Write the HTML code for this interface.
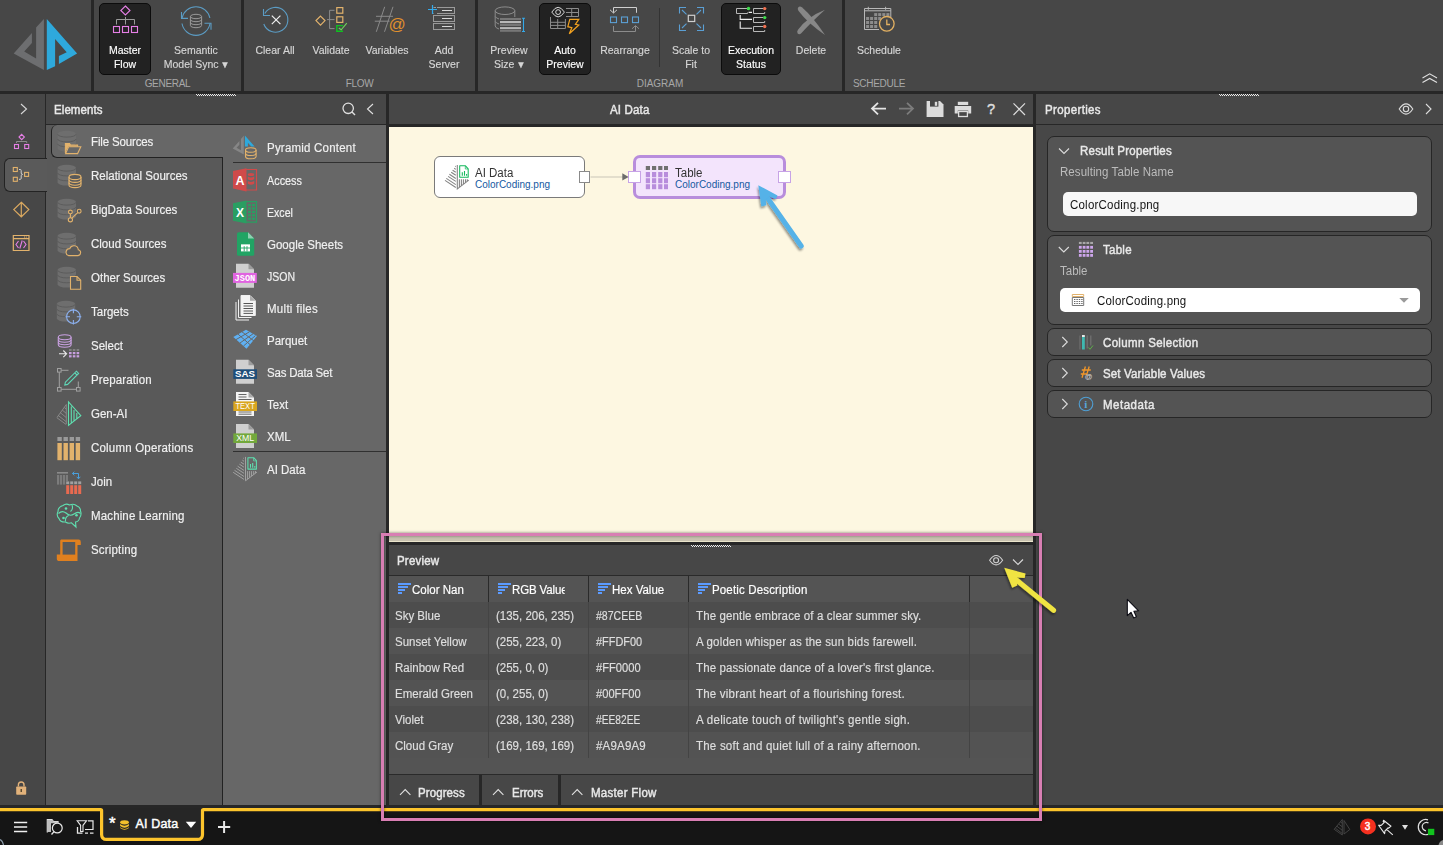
<!DOCTYPE html>
<html lang="en">
<head>
<meta charset="utf-8">
<title>AI Data - Data Flow</title>
<style>
*{box-sizing:border-box;margin:0;padding:0}
html,body{width:1443px;height:845px;overflow:hidden}
body{position:relative;background:#474747;font-family:"Liberation Sans",sans-serif;font-size:12px;color:#e4e4e4}
.abs{position:absolute}
.dk{position:absolute;background:#272727}
.t{position:absolute;white-space:nowrap;line-height:14px;transform:scaleX(.9583);transform-origin:0 50%}
.sb{font-weight:normal;-webkit-text-stroke:0.45px currentColor}
svg{position:absolute;overflow:visible}
/* ribbon */
.grp{position:absolute;top:77px;font-size:10px;color:#a8a8a8;line-height:14px;letter-spacing:-0.3px}
.rt{position:absolute;top:43px;width:120px;margin-left:-60px;text-align:center;line-height:14px;font-size:11px;transform:scaleX(.9545);transform-origin:50% 50%;color:#d6d6d6;white-space:nowrap;-webkit-text-stroke:0.15px currentColor}
.rt.on{color:#fff}
.rt i{font-style:normal;font-size:10px;line-height:10px;position:relative;top:-0.5px;margin:0 -1.6px 0 -1.2px}
/* categories */
.cat{position:absolute;left:91px;font-size:12px;color:#f0f0f0;line-height:14px;white-space:nowrap;transform:scaleX(.9583);transform-origin:0 50%;-webkit-text-stroke:0.18px currentColor}
.li{position:absolute;left:267px;font-size:12px;color:#f0f0f0;line-height:14px;white-space:nowrap;transform:scaleX(.9583);transform-origin:0 50%;-webkit-text-stroke:0.18px currentColor}
/* cards */
.card{position:absolute;left:1047px;width:385px;background:#545454;border:1px solid #262626;border-radius:7px}
.ct{position:absolute;font-weight:normal;-webkit-text-stroke:0.45px currentColor;font-size:12px;color:#e8e8e8;line-height:14px;white-space:nowrap;transform:scaleX(.9583);transform-origin:0 50%}
/* table */
.th{position:absolute;top:586px;font-size:12px;color:#fff;line-height:14px;white-space:nowrap;transform:scaleX(.9583);transform-origin:0 50%;-webkit-text-stroke:0.18px currentColor}
.td{position:absolute;font-size:12px;color:#dedede;line-height:14px;white-space:nowrap;transform:scaleX(.9583);transform-origin:0 50%;-webkit-text-stroke:0.18px currentColor}
</style>
</head>
<body>
<!-- RIBBON -->
<div id="ribbon" class="abs" style="left:0;top:0;width:1443px;height:91px;background:#474747"></div>
<div class="dk" style="left:0;top:91px;width:1443px;height:3px"></div>
<div class="dk" style="left:91px;top:0;width:3px;height:91px"></div>
<div class="dk" style="left:241px;top:0;width:3px;height:91px"></div>
<div class="dk" style="left:475px;top:0;width:3px;height:91px"></div>
<div class="dk" style="left:842px;top:0;width:3px;height:91px"></div>
<!--RIBBON-CONTENT-->
<div class="abs" style="left:99px;top:3px;width:52px;height:72px;background:#222;border:1px solid #0c0c0c;border-radius:5px"></div>
<div class="abs" style="left:539px;top:3px;width:52px;height:72px;background:#222;border:1px solid #0c0c0c;border-radius:5px"></div>
<div class="abs" style="left:721px;top:3px;width:60px;height:72px;background:#222;border:1px solid #0c0c0c;border-radius:5px"></div>
<div class="abs" style="left:659px;top:8px;width:1px;height:59px;background:#333"></div>
<div class="rt on" style="left:125px">Master<br>Flow</div>
<div class="rt" style="left:196px">Semantic<br>Model Sync <i>▼</i></div>
<div class="rt" style="left:275px">Clear All</div>
<div class="rt" style="left:331px">Validate</div>
<div class="rt" style="left:387px">Variables</div>
<div class="rt" style="left:444px">Add<br>Server</div>
<div class="rt" style="left:509px">Preview<br>Size <i>▼</i></div>
<div class="rt on" style="left:565px">Auto<br>Preview</div>
<div class="rt" style="left:625px">Rearrange</div>
<div class="rt" style="left:691px">Scale to<br>Fit</div>
<div class="rt on" style="left:751px">Execution<br>Status</div>
<div class="rt" style="left:811px">Delete</div>
<div class="rt" style="left:879px">Schedule</div>
<div class="grp" style="left:94px;width:147px;text-align:center">GENERAL</div>
<div class="grp" style="left:244px;width:231px;text-align:center">FLOW</div>
<div class="grp" style="left:478px;width:364px;text-align:center;letter-spacing:0px">DIAGRAM</div>
<div class="grp" style="left:853px">SCHEDULE</div>
<svg id="ribsvg" width="1443" height="94" viewBox="0 0 1443 94" style="left:0;top:0" fill="none" stroke-width="1">
<!-- logo -->
<polygon points="43.9,18.9 43.9,70.1 13.7,53.5 31.9,33 31.9,43.1 24.2,51.4 36.1,58.5 36.1,27.4" fill="#6d6e70" stroke="none"/>
<polygon points="46.8,18.9 77.1,53.5 58.9,63.9 58.9,56 66.7,52.3 55.1,39 55.1,66.3 46.8,70.1" fill="#2ea9dc" stroke="none"/>
<!-- master flow -->
<g stroke="#e67fe6" stroke-width="1.1"><path d="M125.4 6 L130 10.5 L125.4 15 L120.8 10.5 Z"/><rect x="113.5" y="26.5" width="6" height="6"/><rect x="122.5" y="26.5" width="6" height="6"/><rect x="131.5" y="26.5" width="6" height="6"/></g>
<path d="M125.5 17 V24.5 M116.5 24.5 V19.5 H134.5 V24.5" stroke="#9a9a9a"/>
<!-- semantic model sync -->
<g stroke="#5b9cc4" stroke-width="1.1"><path d="M182.1 18 A14.2 14.2 0 0 1 209.9 18"/><path d="M210 23.5 A14.2 14.2 0 0 1 182 23.5"/><path d="M181.5 12 V18.4 H188"/><path d="M204.5 23.3 H211 V29.8"/></g>
<g stroke="#9a9a9a" stroke-width="1"><ellipse cx="196" cy="16.5" rx="5.6" ry="2.2"/><path d="M190.4 16.5 V25.5 A5.6 2.2 0 0 0 201.6 25.5 V16.5"/><path d="M190.4 19.5 A5.6 2.2 0 0 0 201.6 19.5 M190.4 22.5 A5.6 2.2 0 0 0 201.6 22.5"/></g>
<!-- clear all -->
<g stroke="#5b9cc4" stroke-width="1.1"><path d="M264.8 13.5 A12.4 12.4 0 1 1 263.8 24"/><path d="M263.5 9 V15.5 H270"/></g>
<path d="M271.8 15.6 L280.4 24.2 M280.4 15.6 L271.8 24.2" stroke="#f0f0f0" stroke-width="1.2"/>
<!-- validate -->
<g stroke="#e2b26c" stroke-width="1.2"><path d="M320.5 16.1 L325 20.6 L320.5 25.1 L316 20.6 Z"/><rect x="336.8" y="7.6" width="6" height="5.6"/><rect x="336.8" y="16.8" width="6" height="5.6"/></g>
<path d="M334.5 10.3 H329.6 V28.6 H334.5 M327 19.6 H334.5" stroke="#8c8c8c"/>
<path d="M343 25.6 H336.8 V31.2 H343" stroke="#0fc020" stroke-width="1.4"/>
<path d="M338.8 28 L341.2 29.8 L346.8 23.2" stroke="#6fd35c" stroke-width="1.1"/>
<!-- variables -->
<path d="M384.7 6.8 L376.3 31.8 M393 6.8 L384.5 31.8 M376 16.3 H393 M374.8 21.2 H389.5" stroke="#8a8a8a"/>
<text x="388.5" y="30" font-family="Liberation Sans, sans-serif" font-size="17" fill="#e0902e" stroke="none" letter-spacing="0">@</text>
<!-- add server -->
<g stroke="#9a9a9a"><rect x="433.5" y="7.5" width="21" height="6"/><rect x="433.5" y="15.5" width="21" height="6"/><rect x="433.5" y="23.5" width="21" height="6"/></g>
<path d="M442 10.5 H452 M442 18.5 H452 M442 26.5 H452" stroke="#d8d8d8" stroke-width="1.2"/>
<rect x="427" y="4" width="10" height="10" fill="#474747" stroke="none"/>
<path d="M433.5 7.5 H436 M433.5 13.5 V14" stroke="#9a9a9a"/>
<path d="M428 9.5 H437 M432.5 5 V14" stroke="#33a9ea" stroke-width="1.2"/>
<!-- preview size -->
<g stroke="#8c8c8c"><ellipse cx="505" cy="10.7" rx="9.8" ry="3.8"/><path d="M495.2 10.7 V26 Q495.5 28 499 29 M514.8 10.7 V17"/><path d="M495.2 16.5 Q496 18 499 19 M495.2 21.5 Q496 23 499 24"/></g>
<g stroke="none"><rect x="500" y="18" width="21" height="2" fill="#777"/><rect x="500" y="21" width="21" height="2.2" fill="#b8b8b8"/><rect x="500" y="24" width="21" height="2" fill="#777"/><rect x="500" y="27.1" width="21" height="2.1" fill="#b8b8b8"/><rect x="500" y="30" width="21" height="1.8" fill="#777"/></g>
<path d="M523.5 18 V31.8 M522 18.3 H525 M522 31.5 H525" stroke="#33a9ea" stroke-width="1.1"/>
<!-- auto preview -->
<g stroke="#dcdcdc" stroke-width="1"><path d="M551.8 12.1 Q558.1 2.5 564.4 12.1 Q558.1 21.7 551.8 12.1 Z"/><circle cx="558.1" cy="12.1" r="2.4"/></g>
<path d="M566 8.5 H578.5 V16.5 H566 M566 12.5 H578.5 M571.7 8.5 V16.5" stroke="#8c8c8c"/>
<path d="M550.5 17 V28.5 H565.4 V19 M550.5 22.3 H565.4 M550.5 25.4 H565.4 M557.7 19 V28.5" stroke="#8c8c8c"/>
<path d="M569.8 19.4 H578.8 L575.4 24.3 L578.8 25 L569.3 33.8 L571.9 27.6 L567.8 26.7 Z" stroke="#f3a21f" stroke-width="1.2"/>
<!-- rearrange -->
<g stroke="#5b9fd4" stroke-width="1.1"><rect x="610.5" y="17" width="6" height="5.6"/><rect x="621.5" y="17" width="6" height="5.6"/><rect x="632.5" y="17" width="6" height="5.6"/></g>
<path d="M636.5 12.8 V7.5 H613.5 V12.8 M610 9.8 L613.5 13 L617 9.8" stroke="#cfcfcf"/>
<path d="M613.5 26 V31.5 H635.5 V26 M632 28.8 L635.5 25.6 L639 28.8" stroke="#8c8c8c"/>
<!-- scale to fit -->
<g stroke="#5b9fd4" stroke-width="1.1"><path d="M679.5 13.5 V7.5 H686 M697 7.5 H703.5 V13.5 M703.5 24.5 V30.5 H697 M686 30.5 H679.5 V24.5"/><path d="M682 10 L686.5 14.3 M701 10 L696.5 14.3 M682 28 L686.5 23.7 M701 28 L696.5 23.7"/></g>
<rect x="688.3" y="15.3" width="6.4" height="6.2" stroke="#cfcfcf" stroke-width="1.2"/>
<!-- execution status -->
<g stroke="#b8b8b8"><path d="M747.5 9.5 V8.5 H736.5 V13.5 H747.5 V12.5 M764.7 12 V13.5 H753.5 V8.5 H763"/><path d="M763 17.5 H753.5 V22.5 H764.7 V21 M763 26.5 H753.5 V31.5 H764.7 V30"/></g>
<path d="M748.6 12.4 H752 M740.2 15 V19.4 H752 M740.2 21.4 V28.3 H752" stroke="#f0f0f0" stroke-width="1.1"/>
<g stroke="none"><circle cx="748.5" cy="8.5" r="1.7" fill="#3ddc4a"/><circle cx="764.7" cy="8.6" r="1.7" fill="#f07050"/><circle cx="764.7" cy="17.6" r="1.7" fill="#3ddc4a"/><circle cx="764.7" cy="26.5" r="1.7" fill="#f07050"/></g>
<!-- delete -->
<g stroke="none" fill="#878787"><path d="M798.3 7.2 Q800 5.8 802.2 7.6 Q813 17.1 825 35 Q807.2 22.6 798.6 11 Q797 8.6 798.3 7.2 Z"/><path d="M797.6 33.4 Q796.6 31.6 798 29.8 Q807.5 16.6 825 9.7 Q811.2 22.2 801.5 33 Q799.2 35.2 797.6 33.4 Z"/></g>
<!-- schedule -->
<path d="M864.5 8.5 H890.8 V19 M879 29.5 H864.5 V8.5 M864.5 10.8 H890.8 M868.3 6.8 V9.8 M885.6 6.8 V9.8" stroke="#b8b8b8"/>
<g stroke="none" fill="#8c8c8c"><rect x="874.2" y="13.1" width="3" height="3"/><rect x="878.2" y="13.1" width="3" height="3"/><rect x="882.3" y="13.1" width="3" height="3"/><rect x="886.4" y="13.1" width="3" height="3"/>
<rect x="866.1" y="17" width="3" height="3"/><rect x="870.1" y="17" width="3" height="3"/><rect x="874.2" y="17" width="3" height="3"/><rect x="878.2" y="17" width="3" height="3"/>
<rect x="866.1" y="21" width="3" height="3"/><rect x="870.1" y="21" width="3" height="3"/><rect x="874.2" y="21" width="3" height="3"/>
<rect x="866.1" y="25" width="3" height="3"/><rect x="870.1" y="25" width="3" height="3"/><rect x="874.2" y="25" width="3" height="3"/></g>
<circle cx="886.8" cy="23.8" r="7.3" fill="#474747" stroke="#e2b062" stroke-width="1.3"/>
<path d="M886.8 19.5 V24.5 H890" stroke="#e2b062" stroke-width="1.3"/>
<!-- collapse chevrons -->
<path d="M1422.5 78 L1429.7 73.8 L1437 78 M1422.5 82.6 L1429.7 78.4 L1437 82.6" stroke="#e0e0e0" stroke-width="1.1"/>
</svg>
<!--/RIBBON-CONTENT-->

<!-- LEFT MINI BAR -->
<div class="dk" style="left:45px;top:94px;width:1px;height:711px"></div>
<!--MINIBAR-->

<!-- ELEMENTS PANEL -->
<div class="abs" style="left:46px;top:125px;width:177px;height:680px;background:#595959"></div>
<div class="abs" style="left:223px;top:125px;width:163px;height:680px;background:#676767"></div>
<div class="dk" style="left:46px;top:124px;width:340px;height:1px"></div>
<!--ELEMENTS-->
<!-- mini bar selected tab -->
<div class="abs" style="left:4px;top:158px;width:43px;height:34px;background:#5a5a5a;border:1px solid #232323;border-right:none;border-radius:6px 0 0 6px"></div>
<!-- selected category tab -->
<div class="abs" style="left:51px;top:125px;width:172px;height:33px;background:#676767;border:1px solid #222;border-right:none;border-top:none;border-radius:6px 0 0 6px"></div>
<div class="dk" style="left:222px;top:157px;width:1px;height:648px;background:#222"></div>
<div class="t sb" style="left:53.8px;top:103px;font-size:12px;color:#e8e8e8;letter-spacing:0.08px">Elements</div>
<div class="cat" style="top:135px;letter-spacing:-0.15px">File Sources</div>
<div class="cat" style="top:169px">Relational Sources</div>
<div class="cat" style="top:203px">BigData Sources</div>
<div class="cat" style="top:237px">Cloud Sources</div>
<div class="cat" style="top:271px">Other Sources</div>
<div class="cat" style="top:305px">Targets</div>
<div class="cat" style="top:339px">Select</div>
<div class="cat" style="top:373px;letter-spacing:0.13px">Preparation</div>
<div class="cat" style="top:407px">Gen-AI</div>
<div class="cat" style="top:441px;letter-spacing:0.2px">Column Operations</div>
<div class="cat" style="top:475px">Join</div>
<div class="cat" style="top:509px;letter-spacing:0.14px">Machine Learning</div>
<div class="cat" style="top:543px;letter-spacing:0.18px">Scripting</div>
<div class="dk" style="left:233px;top:162px;width:153px;height:1px;background:#303030"></div>
<div class="dk" style="left:233px;top:451px;width:153px;height:1px;background:#303030"></div>
<div class="li" style="top:141px;letter-spacing:0.22px">Pyramid Content</div>
<div class="li" style="top:174px;transform:scaleX(0.904)">Access</div>
<div class="li" style="top:206px;transform:scaleX(0.883)">Excel</div>
<div class="li" style="top:238px">Google Sheets</div>
<div class="li" style="top:270px;transform:scaleX(0.877)">JSON</div>
<div class="li" style="top:302px;letter-spacing:0.3px">Multi files</div>
<div class="li" style="top:334px">Parquet</div>
<div class="li" style="top:366px;letter-spacing:-0.22px">Sas Data Set</div>
<div class="li" style="top:398px">Text</div>
<div class="li" style="top:430px">XML</div>
<div class="li" style="top:463px">AI Data</div>
<svg id="elsvg" width="389" height="720" viewBox="0 94 389 720" style="left:0;top:94px" fill="none" stroke-width="1">
<defs>
<g id="dbs"><path d="M0 2.9 A9.2 2.9 0 0 1 18.4 2.9 V17.8 A9.2 2.9 0 0 1 0 17.8 Z" fill="#6e6e6e" stroke="none"/><path d="M0 3.4 A9.2 2.9 0 0 0 18.4 3.4 M0 8.2 A9.2 2.9 0 0 0 18.4 8.2 M0 13.1 A9.2 2.9 0 0 0 18.4 13.1" stroke="#5c5c5c" stroke-width="1"/></g>
<g id="fileg"><path d="M0 0 H12.5 L18 5.5 V24 H0 Z" fill="#cfcfcf" stroke="none"/><path d="M12.5 0 V5.5 H18 Z" fill="#9c9c9c" stroke="none"/></g>
</defs>
<!-- header icons -->
<path d="M21 104 L26.5 109 L21 114" stroke="#d8d8d8" stroke-width="1.1"/>
<circle cx="348.2" cy="108.3" r="5.2" stroke="#e0e0e0" stroke-width="1.3"/><path d="M352 112 L355 115" stroke="#e0e0e0" stroke-width="1.4"/>
<path d="M373 104 L367.5 109 L373 114" stroke="#e0e0e0" stroke-width="1.1"/>
<!-- drag handle -->
<path d="M196 94.5 H236" stroke="#ececec" stroke-width="1" stroke-dasharray="1 1" shape-rendering="crispEdges"/><path d="M197 95.5 H237" stroke="#ececec" stroke-width="1" stroke-dasharray="1 1" shape-rendering="crispEdges"/>
<!-- mini bar icons -->
<g stroke="#e67fe6" stroke-width="1.1"><path d="M21.7 134.3 L24.4 137 L21.7 139.7 L19 137 Z"/><rect x="14.5" y="144.5" width="4" height="4"/><rect x="24.7" y="144.5" width="4" height="4"/></g>
<path d="M16.5 143 V141.5 H26.7 V143" stroke="#8c8c8c"/>
<g stroke="#e2b26c" stroke-width="1.1"><rect x="13.3" y="167.5" width="4" height="4"/><rect x="13.3" y="177.3" width="4" height="4"/><rect x="24.6" y="172.4" width="4" height="4"/></g>
<path d="M19 169.5 H20.3 Q21.2 169.5 21.2 170.5 V173 Q21.2 174.4 22.6 174.4 Q21.2 174.4 21.2 175.8 V178.3 Q21.2 179.3 20.3 179.3 H19" stroke="#cfcfcf"/>
<path d="M21.3 202.3 L28.8 209.6 L21.3 216.8 L13.8 209.6 Z M21.3 202.3 V216.8" stroke="#d9a860" stroke-width="1.2"/>
<path d="M13.3 235.5 H29 V250.5 H13.3 Z M13.3 238.7 H29" stroke="#e2b26c" stroke-width="1.2"/>
<path d="M18.5 241 L16 244.5 L18.5 248 M23.5 241 L26 244.5 L23.5 248 M22.2 240.5 L19.8 248.5" stroke="#e67fe6" stroke-width="1.1"/>
<path d="M24 237 H27.5" stroke="#e2b26c" stroke-width="1" stroke-dasharray="1 0.8"/>
<!-- lock -->
<rect x="16.2" y="786.5" width="10" height="8.2" rx="0.8" fill="#e2b27a" stroke="none"/><path d="M18.4 786.5 V784.8 A2.8 2.8 0 0 1 24 784.8 V786.5" stroke="#e2b27a" stroke-width="1.4"/><rect x="20.5" y="789" width="1.5" height="3" fill="#5a4a30" stroke="none"/>
<!-- category icons -->
<use href="#dbs" x="57.6" y="130.8"/>
<path d="M65.6 153.6 H77.6 L80.8 146.8 H68.6 Z" stroke="#e2b26c" stroke-width="1.1" fill="#686868"/><path d="M65.4 153 V143.6 H69.6 L70.6 145 H77.6 V146.8" stroke="#e2b26c" stroke-width="1.1"/><path d="M65.6 143.8 H69.6 L70.6 145.2 H77.4 V146.6 H68.4 L65.6 152 Z" fill="#e2b26c" stroke="none"/>
<use href="#dbs" x="57.6" y="164.8"/>
<g stroke="#e2b26c" stroke-width="1.1"><path d="M69 177 A6 2.6 0 0 1 81 177 V185 A6 2.6 0 0 1 69 185 Z" fill="#5a5a5a"/><path d="M69 177 A6 2.6 0 0 0 81 177 M69 179.8 A6 2.6 0 0 0 81 179.8 M69 182.6 A6 2.6 0 0 0 81 182.6"/></g>
<use href="#dbs" x="57.6" y="198.8"/>
<g stroke="#e2b26c" stroke-width="1.1" fill="#5a5a5a"><path d="M70.4 219.6 V212.2 M71.6 218.4 L78 212.4"/><circle cx="70.4" cy="212" r="1.9"/><circle cx="79.2" cy="211.2" r="1.9"/><circle cx="70.4" cy="219.8" r="2.1"/></g>
<use href="#dbs" x="57.6" y="232.8"/>
<path d="M68.5 255.6 H78 A3 3 0 0 0 78.3 249.7 A4.4 4.4 0 0 0 69.8 248.6 A3.6 3.6 0 0 0 68.5 255.6 Z" stroke="#e2b26c" stroke-width="1.1" fill="#5a5a5a"/>
<use href="#dbs" x="57.6" y="266.8"/>
<path d="M70.5 276.5 H77 L80.7 280.2 V289.3 H70.5 Z" stroke="#e2b26c" stroke-width="1.1" fill="#5a5a5a"/><path d="M77 276.5 V280.2 H80.7" stroke="#e2b26c" stroke-width="1.1"/>
<use href="#dbs" x="56.8" y="300.8"/>
<g stroke="#8cb0ee" stroke-width="1.1"><circle cx="73.4" cy="316.7" r="6.8" fill="#5a5a5a"/><path d="M73.4 308.8 V313.3 M73.4 320 V324.6 M65.5 316.7 H70 M76.8 316.7 H81.3"/></g>
<!-- select -->
<g stroke="#c8a0e0" stroke-width="1.1"><path d="M58.3 337.2 A6.4 2.5 0 0 1 71.1 337.2 V344.8 A6.4 2.5 0 0 1 58.3 344.8 Z"/><path d="M58.3 337.2 A6.4 2.5 0 0 0 71.1 337.2 M58.3 339.8 A6.4 2.5 0 0 0 71.1 339.8 M58.3 342.3 A6.4 2.5 0 0 0 71.1 342.3"/></g>
<path d="M59 353.8 H66.5 M63.3 350.5 L66.6 353.8 L63.3 357.1" stroke="#e8e8e8" stroke-width="1.1"/>
<g stroke="none"><rect x="69" y="349.2" width="2.6" height="1.6" fill="#8c8c8c"/><rect x="72.8" y="349.2" width="2.6" height="1.6" fill="#8c8c8c"/><rect x="76.6" y="349.2" width="2.6" height="1.6" fill="#8c8c8c"/><rect x="69" y="352" width="2.6" height="2.2" fill="#c8a0e0"/><rect x="72.8" y="352" width="2.6" height="2.2" fill="#c8a0e0"/><rect x="76.6" y="352" width="2.6" height="2.2" fill="#c8a0e0"/><rect x="69" y="355.2" width="2.6" height="2.2" fill="#c8a0e0"/><rect x="72.8" y="355.2" width="2.6" height="2.2" fill="#c8a0e0"/><rect x="76.6" y="355.2" width="2.6" height="2.2" fill="#c8a0e0"/></g>
<!-- preparation -->
<g stroke="#a0a0a0" stroke-width="1"><rect x="57.5" y="368.5" width="3.6" height="3.6"/><rect x="57.5" y="387.5" width="3.6" height="3.6"/><rect x="76.5" y="387.5" width="3.6" height="3.6"/><path d="M61.1 370.3 H68.5 M59.3 372.1 V387.5 M61.1 389.3 H76.5 M78.3 387.5 V381.5"/></g>
<path d="M76.4 371.2 L78.6 373.4 L67.6 384.4 L64.8 385 L65.4 382.2 Z M74.8 372.8 L77 375" stroke="#5fd8b8" stroke-width="1.1"/>
<!-- gen-ai -->
<path d="M68.5 402 V425.4 L80.8 415.6 Z M71.3 406.5 V422.8 M74 410 V420.8 M76.8 413 V418.6" stroke="#5fe0b0" stroke-width="1.1"/>
<path d="M66.3 404.5 V424 M64.2 407.4 L66.3 409.2 M62.2 410 L66.3 413.4 M60.2 412.6 L66.3 417.6 M58.2 415.4 L66.3 421.8 M57 417.8 L66.3 424.6 M66.3 404.5 L57 417.5" stroke="#8c8c8c" stroke-width="0.9"/>
<!-- column ops -->
<g stroke="none"><rect x="57.4" y="437" width="4.4" height="4" fill="#9a9a9a"/><rect x="63.5" y="437" width="4.4" height="4" fill="#9a9a9a"/><rect x="69.6" y="437" width="4.4" height="4" fill="#9a9a9a"/><rect x="75.7" y="437" width="4.4" height="4" fill="#9a9a9a"/><rect x="57.4" y="443" width="4.4" height="17.2" fill="#e2b26c"/><rect x="63.5" y="443" width="4.4" height="17.2" fill="#e2b26c"/><rect x="69.6" y="443" width="4.4" height="17.2" fill="#e2b26c"/><rect x="75.7" y="443" width="4.4" height="17.2" fill="#e2b26c"/></g>
<!-- join -->
<g stroke="none"><rect x="57" y="472" width="11" height="1.6" fill="#8a8a8a"/><rect x="57" y="475" width="2.2" height="9.6" fill="#7c7c7c"/><rect x="60" y="475" width="2.2" height="9.6" fill="#7c7c7c"/><rect x="63" y="475" width="2.2" height="9.6" fill="#7c7c7c"/><rect x="66" y="475" width="2" height="6" fill="#7c7c7c"/>
<rect x="66.2" y="481.4" width="3" height="2.8" fill="#a0a0a0"/><rect x="70.2" y="481.4" width="3" height="2.8" fill="#a0a0a0"/><rect x="74.2" y="481.4" width="3" height="2.8" fill="#a0a0a0"/><rect x="78.2" y="481.4" width="3" height="2.8" fill="#a0a0a0"/>
<rect x="66.2" y="485.2" width="3" height="8.8" fill="#e96a50"/><rect x="70.2" y="485.2" width="3" height="8.8" fill="#e96a50"/><rect x="74.2" y="485.2" width="3" height="8.8" fill="#e96a50"/><rect x="78.2" y="485.2" width="3" height="8.8" fill="#e96a50"/></g>
<path d="M72.5 473.5 H78.5 V478.5 M74.3 471.7 L72.4 473.5 L74.3 475.3 M76.7 476.8 L78.5 478.8 L80.3 476.8" stroke="#4aa0dc" stroke-width="1"/>
<!-- machine learning -->
<g stroke="#5fe0b0" stroke-width="1.1"><path d="M63 505.5 Q66 503 69.5 505 Q74 503 77 506 Q80.5 507 80.5 511 Q82 515 79.5 518 Q79 521.5 75.5 522 L76 527 L71.5 522.8 Q68 524 65.5 522 Q60.5 522.5 59 518.5 Q56 515.5 58 511.5 Q58 507 63 505.5 Z"/><path d="M58.5 513.5 Q62 510 66 513 Q70 517 74 514 Q78 511 80.5 513.5 M65.5 521.5 Q65 517 68.5 515.5 M72 505 Q73.5 509 70.5 511.5"/></g>
<g fill="#5fe0b0" stroke="none"><circle cx="66" cy="508.5" r="1.3"/><circle cx="76.5" cy="515.2" r="1.3"/><circle cx="63.5" cy="518" r="1.3"/></g>
<!-- scripting -->
<path d="M61 539.6 H78.5 Q80.8 539.6 80.8 542 V545 H77.5 V561 H59.5 Q56.8 561 56.8 558.4 V554.6 H60.2 V540.4 Z" fill="#e0801f" stroke="none"/><rect x="62.6" y="542" width="12.6" height="12.6" fill="#5a5a5a" stroke="none"/>
<!-- LIST ICONS -->
<!-- pyramid content -->
<g transform="translate(243.8,135.8) scale(0.367) translate(-43.9,-18.9)"><polygon points="43.9,18.9 43.9,70.1 13.7,53.5 31.9,33 31.9,43.1 24.2,51.4 36.1,58.5 36.1,27.4" fill="#868686" stroke="none"/></g>
<polygon points="244.9,135.4 254.6,146.5 251.2,146.5 247.9,142.8 247.9,146.5 244.9,146.5" fill="#2ea9dc" stroke="none"/>
<g stroke="#e2b26c" stroke-width="1.1"><path d="M245.5 150 A5.3 2.3 0 0 1 256.1 150 V156.4 A5.3 2.3 0 0 1 245.5 156.4 Z" fill="#676767"/><path d="M245.5 150 A5.3 2.3 0 0 0 256.1 150 M245.5 153.2 A5.3 2.3 0 0 0 256.1 153.2"/></g>
<!-- access -->
<path d="M246 169.5 H256.5 V190 H246" stroke="#d04a4a" stroke-width="1.2"/><g fill="#d04a4a" stroke="none"><ellipse cx="251" cy="174.5" rx="3.2" ry="1.5"/><path d="M247.8 176.5 Q251 178.5 254.2 176.5 V179.3 Q251 181.3 247.8 179.3 Z M247.8 181 Q251 183 254.2 181 V183.8 Q251 185.8 247.8 183.8 Z"/></g>
<path d="M233 171 L246.5 168.3 V191.4 L233 188.6 Z" fill="#d04a4a" stroke="none"/>
<text x="235.6" y="184.6" font-family="Liberation Sans, sans-serif" font-weight="bold" font-size="12.5" fill="#fff" stroke="none">A</text>
<!-- excel -->
<path d="M246 201.6 H256.5 V222.2 H246" stroke="#2a9e62" stroke-width="1.2"/><g fill="#2a9e62" stroke="none"><rect x="248" y="204" width="3" height="2.2"/><rect x="252" y="204" width="3" height="2.2"/><rect x="248" y="207.4" width="3" height="2.2"/><rect x="252" y="207.4" width="3" height="2.2"/><rect x="248" y="210.8" width="3" height="2.2"/><rect x="252" y="210.8" width="3" height="2.2"/><rect x="248" y="214.2" width="3" height="2.2"/><rect x="252" y="214.2" width="3" height="2.2"/><rect x="248" y="217.6" width="3" height="2.2"/><rect x="252" y="217.6" width="3" height="2.2"/></g>
<path d="M233 203.2 L246.5 200.5 V223.6 L233 220.8 Z" fill="#2a9e62" stroke="none"/>
<text x="236" y="216.6" font-family="Liberation Sans, sans-serif" font-weight="bold" font-size="12" fill="#fff" stroke="none">X</text>
<!-- google sheets -->
<path d="M238.6 232.2 H248 L254.2 238.4 V254.2 Q254.2 255.8 252.6 255.8 H238.6 Q237 255.8 237 254.2 V233.8 Q237 232.2 238.6 232.2 Z" fill="#21a464" stroke="none"/><path d="M248 232.2 V238.4 H254.2 Z" fill="#8ed1b1" stroke="none"/>
<rect x="241" y="244.6" width="9" height="6.8" fill="#fff" stroke="none"/><path d="M241 248 H250 M244.2 246.2 V251.4 M247 246.2 V251.4" stroke="#21a464" stroke-width="0.9"/><rect x="241" y="244.6" width="9" height="1.4" fill="#fff" stroke="none"/>
<!-- json -->
<use href="#fileg" x="236" y="263.8"/><rect x="233" y="272.9" width="23.8" height="10" fill="#e063e0" stroke="none"/>
<text x="234.6" y="281.2" font-family="Liberation Mono, monospace" font-weight="bold" font-size="8.6" fill="#fff" stroke="none" textLength="20.6" lengthAdjust="spacingAndGlyphs">JSON</text>
<!-- multi files -->
<g stroke="#f0f0f0" stroke-width="1" fill="#686868"><path d="M236 302 V320 H249"/><path d="M238.5 299.5 V317.5 H251.5"/><path d="M241 295.5 H250 L255.3 300.8 V315.5 H241 Z" fill="#f4f4f4"/></g>
<path d="M250 295.5 V300.8 H255.3 Z" fill="#aaa" stroke="none"/><path d="M243.5 303.5 H253 M243.5 306 H253 M243.5 308.5 H253 M243.5 311 H253 M243.5 313.4 H253" stroke="#555" stroke-width="1"/>
<!-- parquet -->
<g fill="#5fb0f2" stroke="none"><path d="M246 329.8 L257 336 L246.5 348.7 L233.3 337 Z"/></g>
<path d="M237.5 333.7 L250.5 345 M241.8 331.7 L254 341 M236 339.6 L249.5 331.8 M240 343 L253 333.8 M243.5 346 L255.5 335.5" stroke="#686868" stroke-width="1"/>
<!-- sas -->
<use href="#fileg" x="236" y="359.8"/><rect x="233.3" y="369.3" width="23.7" height="9.6" fill="#1f4e79" stroke="none"/>
<text x="235" y="377.3" font-family="Liberation Sans, sans-serif" font-weight="bold" font-size="8.6" fill="#fff" stroke="none" textLength="20" lengthAdjust="spacingAndGlyphs">SAS</text>
<!-- text -->
<path d="M236 392 H248.5 L254 397.5 V416 H236 Z" fill="#f4f4f4" stroke="none"/><path d="M248.5 392 V397.5 H254 Z" fill="#aaa" stroke="none"/><path d="M238.5 394.5 H246.5 M238.5 397 H246.5 M238.5 399.5 H251.5 M238.5 412 H251.5 M238.5 414.2 H251.5" stroke="#666" stroke-width="1"/>
<rect x="233.3" y="401.4" width="23.7" height="9.6" fill="#d9a620" stroke="none"/>
<text x="235.4" y="409.3" font-family="Liberation Sans, sans-serif" font-size="8.4" fill="#fff" stroke="none" textLength="19.4" lengthAdjust="spacingAndGlyphs">TEXT</text>
<!-- xml -->
<use href="#fileg" x="236" y="424"/><rect x="233.3" y="433.4" width="23.7" height="9.6" fill="#72a83c" stroke="none"/>
<text x="236.2" y="441.3" font-family="Liberation Sans, sans-serif" font-size="8.4" fill="#fff" stroke="none" textLength="18" lengthAdjust="spacingAndGlyphs">XML</text>
<!-- ai data -->
<path d="M243.3 458.1 L244.0 458.5 M242.4 460.2 L244.0 461.3 M240.8 462.2 L244.0 464.2 M239.4 464.2 L244.0 467.2 M237.6 466.2 L244.0 470.4 M236.3 468.3 L244.0 473.3 M234.5 470.3 L244.0 476.5 M233.2 472.3 L244.0 479.4 M245.5 456.9 V480.8 L257.0 472.0 M247.6 471.1 V479.2 M249.6 471.1 V477.7 M251.6 471.1 V476.1 M253.7 471.1 V474.5 M255.5 471.1 V473.1" stroke="#a2a2a2" stroke-width="1" fill="none"/><path d="M247.9 457.7 H253.7 L256.4 460.7 V469.1 H247.9 Z" fill="#676767" stroke="#5fe0b0" stroke-width="1.05" stroke-linejoin="round"/><path d="M253.5 457.9 V460.9 H256.2" fill="none" stroke="#5fe0b0" stroke-width="0.7"/><path d="M250.5 467.7 V464.1 M252.7 467.7 V462.9 M254.8 467.7 V465.9" stroke="#5fe0b0" stroke-width="1.1" fill="none"/>
</svg>
<!--/ELEMENTS-->

<!-- vertical dark bands -->
<div class="dk" style="left:386px;top:94px;width:3px;height:711px"></div>
<div class="dk" style="left:1033px;top:94px;width:3px;height:711px"></div>

<!-- CANVAS -->
<div class="dk" style="left:389px;top:124px;width:644px;height:3px"></div>
<div class="abs" style="left:389px;top:127px;width:644px;height:409px;background:#fdf7e1"></div>
<div class="abs" style="left:389px;top:535px;width:644px;height:7px;background:linear-gradient(#d6d4bc 0,#c8c2b0 2px,#c8c2b0 5.6px,#ebe5cb 6px)"></div>
<div class="dk" style="left:389px;top:542px;width:644px;height:3px"></div>
<!--CANVAS-->
<div class="t sb" style="left:610px;top:103px;font-size:12px;color:#e8e8e8;letter-spacing:0.16px">AI Data</div>
<div class="t sb" style="transform:none;left:987px;top:100.5px;font-size:14.5px;line-height:16px;color:#dcdcdc">?</div>
<!-- node 1 -->
<div class="abs" style="left:433.5px;top:156px;width:151px;height:41.5px;background:#fff;border:1px solid #7a7a7a;border-radius:6px"></div>
<div class="abs" style="left:578.5px;top:171px;width:11.5px;height:11.5px;background:#fff;border:1px solid #8a8a8a"></div>
<div class="t" style="left:475px;top:166px;font-size:12px;color:#333">AI Data</div>
<div class="t" style="transform:none;left:475px;top:179.4px;font-size:10px;color:#15599f;line-height:12px">ColorCoding.png</div>
<!-- node 2 -->
<div class="abs" style="left:632.5px;top:155px;width:153px;height:44px;background:#f3e4fc;border:3px solid #b88ddc;border-radius:7px"></div>
<div class="abs" style="left:628.4px;top:171px;width:12.2px;height:11.8px;background:#fff;border:1px solid #c7a3e6"></div>
<div class="abs" style="left:778.3px;top:171px;width:12.4px;height:11.8px;background:#fff;border:1px solid #c7a3e6"></div>
<div class="t" style="left:675px;top:166px;font-size:12px;color:#333">Table</div>
<div class="t" style="transform:none;left:675px;top:179.4px;font-size:10px;color:#15599f;line-height:12px">ColorCoding.png</div>
<svg width="644" height="440" viewBox="389 94 644 440" style="left:389px;top:94px" fill="none">
<defs><filter id="ds" x="-30%" y="-30%" width="160%" height="160%"><feGaussianBlur in="SourceAlpha" stdDeviation="1.1"/><feOffset dx="-1.5" dy="1.5"/><feComponentTransfer><feFuncA type="linear" slope="0.42"/></feComponentTransfer><feMerge><feMergeNode/><feMergeNode in="SourceGraphic"/></feMerge></filter></defs>
<!-- header icons -->
<path d="M886 108.6 H872.5 M878 102.8 L872 108.6 L878 114.4" stroke="#e4e4e4" stroke-width="1.8"/>
<path d="M899 108.6 H912.5 M907 102.8 L913 108.6 L907 114.4" stroke="#7c7c7c" stroke-width="1.8"/>
<path d="M926.6 101 H940 L943.5 104.5 V117 H926.6 Z" fill="#dcdcdc"/><rect x="930" y="101" width="8.4" height="5.6" fill="#474747"/><rect x="934.8" y="101.8" width="2.4" height="4" fill="#dcdcdc"/>
<path d="M957.8 101.8 H968.2 V105 H957.8 Z" fill="#dcdcdc"/><path d="M954.7 106 H971.2 V113.5 H968.2 V110.5 H957.8 V113.5 H954.7 Z" fill="#dcdcdc"/><rect x="958.6" y="111.5" width="8.8" height="5" stroke="#dcdcdc" stroke-width="1.3"/>
<path d="M1013.5 103.3 L1025 115 M1025 103.3 L1013.5 115" stroke="#dcdcdc" stroke-width="1.2"/>
<!-- node1 icon -->
<path d="M455.1 166.2 L455.8 166.6 M454.2 168.3 L455.8 169.4 M452.6 170.3 L455.8 172.3 M451.2 172.3 L455.8 175.3 M449.4 174.3 L455.8 178.5 M448.1 176.4 L455.8 181.4 M446.3 178.4 L455.8 184.6 M445.0 180.4 L455.8 187.5 M457.3 165.0 V188.9 L468.8 180.1 M459.4 179.2 V187.3 M461.4 179.2 V185.8 M463.4 179.2 V184.2 M465.5 179.2 V182.6 M467.3 179.2 V181.2" stroke="#858585" stroke-width="1.1" fill="none"/><path d="M459.7 165.8 H465.5 L468.2 168.8 V177.2 H459.7 Z" fill="#fff" stroke="#14b85c" stroke-width="1.05" stroke-linejoin="round"/><path d="M465.3 166.0 V169.0 H468.0" fill="none" stroke="#14b85c" stroke-width="0.7"/><path d="M462.3 175.8 V172.2 M464.5 175.8 V171.0 M466.6 175.8 V174.0" stroke="#14b85c" stroke-width="1.1" fill="none"/>
<!-- connector -->
<path d="M590.5 177 H623" stroke="#c9c6b8" stroke-width="1.2"/>
<path d="M622.3 173.3 L628.6 176.9 L622.3 180.5 Z" fill="#6c6c6c"/>
<!-- node2 icon -->
<g fill="#707070"><rect x="645.8" y="166" width="4.2" height="4"/><rect x="652" y="166" width="4.2" height="4"/><rect x="658.2" y="166" width="4.2" height="4"/><rect x="664" y="166" width="4" height="4"/></g>
<g fill="#b88ddc"><rect x="645.8" y="172" width="4.2" height="5.2"/><rect x="652" y="172" width="4.2" height="5.2"/><rect x="658.2" y="172" width="4.2" height="5.2"/><rect x="664" y="172" width="4" height="5.2"/>
<rect x="645.8" y="178.2" width="4.2" height="5"/><rect x="652" y="178.2" width="4.2" height="5"/><rect x="658.2" y="178.2" width="4.2" height="5"/><rect x="664" y="178.2" width="4" height="5"/>
<rect x="645.8" y="184.2" width="4.2" height="5"/><rect x="652" y="184.2" width="4.2" height="5"/><rect x="658.2" y="184.2" width="4.2" height="5"/><rect x="664" y="184.2" width="4" height="5"/></g>
<!-- blue arrow -->
<g filter="url(#ds)"><path d="M801.2 246 L767.5 198" stroke="#54b2e8" stroke-width="5" stroke-linecap="round"/><path d="M758.3 185.2 L777.5 195.5 L775.8 198.9 L769 196.5 L765.8 199.6 L766.4 205.3 L761.3 206.5 Z" fill="#54b2e8"/></g>
</svg>
<!--/CANVAS-->

<!-- PREVIEW -->
<!--PREVIEW-->
<div class="abs" style="left:389px;top:545px;width:644px;height:260px;background:#474747"></div>
<div class="t sb" style="left:396.7px;top:554px;font-size:12px;color:#e8e8e8;letter-spacing:0.21px">Preview</div>
<div class="dk" style="left:389px;top:575px;width:644px;height:1px;background:#2a2a2a"></div>
<div class="abs" style="left:389px;top:576px;width:644px;height:198px;background:#545454"></div>
<div class="abs" style="left:389px;top:602px;width:644px;height:26px;background:#4d4d4d"></div>
<div class="td" style="left:394.8px;top:609.0px">Sky Blue</div>
<div class="td" style="left:496px;top:609.0px">(135, 206, 235)</div>
<div class="td" style="left:596px;top:609.0px;transform:scaleX(0.877)">#87CEEB</div>
<div class="td" style="left:696px;top:609.0px;letter-spacing:0.13px">The gentle embrace of a clear summer sky.</div>
<div class="abs" style="left:389px;top:628px;width:644px;height:26px;background:#535353"></div>
<div class="td" style="left:394.8px;top:635.0px">Sunset Yellow</div>
<div class="td" style="left:496px;top:635.0px">(255, 223, 0)</div>
<div class="td" style="left:596px;top:635.0px;transform:scaleX(0.911)">#FFDF00</div>
<div class="td" style="left:696px;top:635.0px;letter-spacing:0.17px">A golden whisper as the sun bids farewell.</div>
<div class="abs" style="left:389px;top:654px;width:644px;height:26px;background:#4d4d4d"></div>
<div class="td" style="left:394.8px;top:661.0px">Rainbow Red</div>
<div class="td" style="left:496px;top:661.0px">(255, 0, 0)</div>
<div class="td" style="left:596px;top:661.0px;transform:scaleX(0.929)">#FF0000</div>
<div class="td" style="left:696px;top:661.0px;letter-spacing:0.11px">The passionate dance of a lover's first glance.</div>
<div class="abs" style="left:389px;top:680px;width:644px;height:26px;background:#535353"></div>
<div class="td" style="left:394.8px;top:687.0px">Emerald Green</div>
<div class="td" style="left:496px;top:687.0px">(0, 255, 0)</div>
<div class="td" style="left:596px;top:687.0px;transform:scaleX(0.929)">#00FF00</div>
<div class="td" style="left:696px;top:687.0px;letter-spacing:0.22px">The vibrant heart of a flourishing forest.</div>
<div class="abs" style="left:389px;top:706px;width:644px;height:26px;background:#4d4d4d"></div>
<div class="td" style="left:394.8px;top:713.0px">Violet</div>
<div class="td" style="left:496px;top:713.0px">(238, 130, 238)</div>
<div class="td" style="left:596px;top:713.0px;transform:scaleX(0.851)">#EE82EE</div>
<div class="td" style="left:696px;top:713.0px;letter-spacing:0.29px">A delicate touch of twilight's gentle sigh.</div>
<div class="abs" style="left:389px;top:732px;width:644px;height:26px;background:#535353"></div>
<div class="td" style="left:394.8px;top:739.0px">Cloud Gray</div>
<div class="td" style="left:496px;top:739.0px">(169, 169, 169)</div>
<div class="td" style="left:596px;top:739.0px;letter-spacing:0.2px">#A9A9A9</div>
<div class="td" style="left:696px;top:739.0px;letter-spacing:0.23px">The soft and quiet lull of a rainy afternoon.</div>
<div class="abs" style="left:488px;top:576px;width:1px;height:26px;background:#2a2a2a"></div>
<div class="abs" style="left:488px;top:602px;width:1px;height:156px;background:#444"></div>
<div class="abs" style="left:588px;top:576px;width:1px;height:26px;background:#2a2a2a"></div>
<div class="abs" style="left:588px;top:602px;width:1px;height:156px;background:#444"></div>
<div class="abs" style="left:688px;top:576px;width:1px;height:26px;background:#2a2a2a"></div>
<div class="abs" style="left:688px;top:602px;width:1px;height:156px;background:#444"></div>
<div class="abs" style="left:969px;top:576px;width:1px;height:26px;background:#2a2a2a"></div>
<div class="abs" style="left:969px;top:602px;width:1px;height:156px;background:#444"></div>
<div class="th" style="left:411.5px;top:583px">Color Nan</div>
<div class="th" style="left:511.5px;top:583px;width:54.9px;overflow:hidden;letter-spacing:-0.15px">RGB Value</div>
<div class="th" style="left:611.5px;top:583px">Hex Value</div>
<div class="th" style="left:711.5px;top:583px;letter-spacing:0.16px">Poetic Description</div>
<div class="dk" style="left:389px;top:774px;width:644px;height:1px;background:#2a2a2a"></div>
<div class="dk" style="left:479px;top:775px;width:3px;height:30px"></div>
<div class="dk" style="left:558px;top:775px;width:3px;height:30px"></div>
<div class="t sb" style="left:417.8px;top:786px;font-size:12px;color:#e8e8e8;letter-spacing:0.10px">Progress</div>
<div class="t sb" style="left:511.9px;top:786px;font-size:12px;color:#e8e8e8">Errors</div>
<div class="t sb" style="left:590.6px;top:786px;font-size:12px;color:#e8e8e8;letter-spacing:0.29px">Master Flow</div>
<svg width="660" height="275" viewBox="389 540 660 275" style="left:389px;top:540px" fill="none">
<path d="M398 584 H411 M398 587 H408 M398 590 H405 M398 593 H402" stroke="#5b9bff" stroke-width="2" shape-rendering="crispEdges"/>
<path d="M498 584 H511 M498 587 H508 M498 590 H505 M498 593 H502" stroke="#5b9bff" stroke-width="2" shape-rendering="crispEdges"/>
<path d="M598 584 H611 M598 587 H608 M598 590 H605 M598 593 H602" stroke="#5b9bff" stroke-width="2" shape-rendering="crispEdges"/>
<path d="M698 584 H711 M698 587 H708 M698 590 H705 M698 593 H702" stroke="#5b9bff" stroke-width="2" shape-rendering="crispEdges"/>
<path d="M989.6 560.2 Q996.1 550.9 1002.6 560.2 Q996.1 569.5 989.6 560.2 Z" stroke="#d0d0d0" stroke-width="1.1"/><circle cx="996.1" cy="560.2" r="2.5" stroke="#d0d0d0" stroke-width="1.1"/>
<path d="M1013 559.5 L1018 564.5 L1023 559.5" stroke="#d8d8d8" stroke-width="1.1"/>
<path d="M691 545.5 H731" stroke="#ececec" stroke-width="1" stroke-dasharray="1 1" shape-rendering="crispEdges"/><path d="M692 546.5 H732" stroke="#ececec" stroke-width="1" stroke-dasharray="1 1" shape-rendering="crispEdges"/>
<path d="M400 794.8 L405.2 789.5 L410.4 794.8" stroke="#e0e0e0" stroke-width="1.1"/>
<path d="M493 794.8 L498.2 789.5 L503.4 794.8" stroke="#e0e0e0" stroke-width="1.1"/>
<path d="M572 794.8 L577.2 789.5 L582.4 794.8" stroke="#e0e0e0" stroke-width="1.1"/>
</svg>
<!--/PREVIEW-->

<!-- PROPERTIES -->
<div class="dk" style="left:1036px;top:124px;width:407px;height:1px"></div>
<!--PROPS-->
<div class="t sb" style="left:1044.5px;top:103px;font-size:12px;color:#e8e8e8;letter-spacing:0.37px">Properties</div>
<div class="card" style="top:136px;height:96px"></div>
<div class="card" style="top:235px;height:90px"></div>
<div class="card" style="top:328px;height:28px"></div>
<div class="card" style="top:359px;height:28px"></div>
<div class="card" style="top:390px;height:28px"></div>
<div class="ct" style="left:1079.5px;top:144px;letter-spacing:0.23px">Result Properties</div>
<div class="t" style="left:1060px;top:165px;color:#bcbcbc;letter-spacing:0.07px">Resulting Table Name</div>
<div class="abs" style="left:1063px;top:192px;width:353.5px;height:24px;background:#f7f7f7;border-radius:5px"></div>
<div class="t" style="left:1069.5px;top:198px;color:#141414;letter-spacing:0.22px">ColorCoding.png</div>
<div class="ct" style="left:1103px;top:243px;letter-spacing:0.27px">Table</div>
<div class="t" style="left:1060px;top:264px;color:#bcbcbc">Table</div>
<div class="abs" style="left:1060px;top:288px;width:359.5px;height:24px;background:#fff;border-radius:5px"></div>
<div class="t" style="left:1096.5px;top:294px;color:#141414;letter-spacing:0.22px">ColorCoding.png</div>
<div class="ct" style="left:1103px;top:336px;letter-spacing:0.35px">Column Selection</div>
<div class="ct" style="left:1103px;top:367px;letter-spacing:0.16px">Set Variable Values</div>
<div class="ct" style="left:1103px;top:398px;letter-spacing:0.52px">Metadata</div>
<svg width="407" height="340" viewBox="1036 94 407 340" style="left:1036px;top:94px" fill="none">
<path d="M1399.2 109 Q1406 98.8 1412.8 109 Q1406 119.2 1399.2 109 Z" stroke="#dcdcdc" stroke-width="1.1"/><circle cx="1406" cy="109" r="2.7" stroke="#dcdcdc" stroke-width="1.1"/>
<path d="M1426 104 L1431 109 L1426 114" stroke="#dcdcdc" stroke-width="1.1"/>
<path d="M1219 94.5 H1259" stroke="#ececec" stroke-width="1" stroke-dasharray="1 1" shape-rendering="crispEdges"/><path d="M1220 95.5 H1260" stroke="#ececec" stroke-width="1" stroke-dasharray="1 1" shape-rendering="crispEdges"/>
<path d="M1059 148.5 L1064 153.5 L1069 148.5" stroke="#dcdcdc" stroke-width="1.1"/>
<path d="M1058.8 247 L1063.8 252 L1068.8 247" stroke="#dcdcdc" stroke-width="1.1"/>
<path d="M1062.3 337 L1067.3 342 L1062.3 347" stroke="#dcdcdc" stroke-width="1.1"/>
<path d="M1062.3 368 L1067.3 373 L1062.3 378" stroke="#dcdcdc" stroke-width="1.1"/>
<path d="M1062.3 399 L1067.3 404 L1062.3 409" stroke="#dcdcdc" stroke-width="1.1"/>
<rect x="1078.9" y="241.9" width="2.8" height="2.1" fill="#a8a8a8"/><rect x="1078.9" y="245.9" width="2.8" height="2.8" fill="#cda6ec"/><rect x="1078.9" y="250.0" width="2.8" height="2.8" fill="#cda6ec"/><rect x="1078.9" y="254.0" width="2.8" height="2.8" fill="#cda6ec"/><rect x="1082.7" y="241.9" width="2.8" height="2.1" fill="#a8a8a8"/><rect x="1082.7" y="245.9" width="2.8" height="2.8" fill="#cda6ec"/><rect x="1082.7" y="250.0" width="2.8" height="2.8" fill="#cda6ec"/><rect x="1082.7" y="254.0" width="2.8" height="2.8" fill="#cda6ec"/><rect x="1086.4" y="241.9" width="2.8" height="2.1" fill="#a8a8a8"/><rect x="1086.4" y="245.9" width="2.8" height="2.8" fill="#cda6ec"/><rect x="1086.4" y="250.0" width="2.8" height="2.8" fill="#cda6ec"/><rect x="1086.4" y="254.0" width="2.8" height="2.8" fill="#cda6ec"/><rect x="1090.2" y="241.9" width="2.8" height="2.1" fill="#a8a8a8"/><rect x="1090.2" y="245.9" width="2.8" height="2.8" fill="#cda6ec"/><rect x="1090.2" y="250.0" width="2.8" height="2.8" fill="#cda6ec"/><rect x="1090.2" y="254.0" width="2.8" height="2.8" fill="#cda6ec"/>
<path d="M1072.3 294.5 H1083.7 V296.5 H1072.3 Z" stroke="#e2b26c" stroke-width="1"/><path d="M1072.3 297.5 H1083.7 V305.5 H1072.3 Z" stroke="#777" stroke-width="1"/>
<rect x="1074.0" y="299.0" width="1.4" height="1" fill="#666"/><rect x="1076.4" y="299.0" width="1.4" height="1" fill="#666"/><rect x="1078.8" y="299.0" width="1.4" height="1" fill="#666"/><rect x="1081.2" y="299.0" width="1.4" height="1" fill="#666"/><rect x="1074.0" y="301.0" width="1.4" height="1" fill="#666"/><rect x="1076.4" y="301.0" width="1.4" height="1" fill="#666"/><rect x="1078.8" y="301.0" width="1.4" height="1" fill="#666"/><rect x="1081.2" y="301.0" width="1.4" height="1" fill="#666"/><rect x="1074.0" y="303.0" width="1.4" height="1" fill="#666"/><rect x="1076.4" y="303.0" width="1.4" height="1" fill="#666"/><rect x="1078.8" y="303.0" width="1.4" height="1" fill="#666"/><rect x="1081.2" y="303.0" width="1.4" height="1" fill="#666"/>
<path d="M1399.3 298 H1408.8 L1404 302.8 Z" fill="#9a9a9a"/>
<rect x="1079.3" y="335.5" width="1.2" height="14" fill="#6c6c6c"/><rect x="1082" y="336.5" width="2.8" height="13" fill="#3fb8b0"/><rect x="1082" y="335" width="2.8" height="2" fill="#e8e8e8"/><rect x="1086.5" y="335.5" width="1.5" height="13" fill="#6c6c6c"/><rect x="1090" y="335.5" width="1.5" height="10" fill="#6c6c6c"/><path d="M1088.5 347.5 L1090 349.3 L1093 345.5" stroke="#5fb04a" stroke-width="1"/>
<path d="M1085.4 366.5 L1082 377.8 M1089.2 366.5 L1086.6 375 M1081.8 370 H1090.8 M1080.8 374 H1086.5" stroke="#f0962a" stroke-width="1.3"/><text x="1084.8" y="378.6" font-family="Liberation Sans, sans-serif" font-size="7.6" fill="#dcdcdc">@</text>
<circle cx="1086" cy="404" r="6.8" stroke="#4f9fd4" stroke-width="1.1"/><text x="1084.2" y="407.6" font-family="Liberation Serif, serif" font-weight="bold" font-size="11" fill="#58a6da">i</text>
</svg>
<!--/PROPS-->

<!-- BOTTOM BAR -->
<div class="dk" style="left:0;top:805px;width:1443px;height:3px"></div>
<div class="abs" style="left:0;top:808px;width:1443px;height:37px;background:#151515"></div>
<!--BOTTOM-->
<div class="t sb" style="transform:none;left:109px;top:815.5px;font-size:17px;line-height:20px;color:#fff;z-index:3;margin-top:-1.5px">*</div>
<div class="t sb" style="transform:none;left:135.5px;top:816.5px;font-size:12.5px;color:#fff;z-index:3;letter-spacing:0.16px">AI Data</div>
<div class="t sb" style="transform:none;left:1364.8px;top:820px;font-size:10px;color:#fff;z-index:3">3</div>
<svg width="1443" height="37" viewBox="0 808 1443 37" style="left:0;top:808px" fill="none">
<path d="M101.6 808 V834.4 Q101.6 839.4 106.6 839.4 H197.5 Q202.5 839.4 202.5 834.4 V808 Z" fill="#262626"/><path d="M-2 809.6 H100.6 Q101.6 809.6 101.6 810.6 V834.4 Q101.6 839.4 106.6 839.4 H197.5 Q202.5 839.4 202.5 834.4 V810.6 Q202.5 809.6 203.5 809.6 H1446" stroke="#fcc42c" stroke-width="3.2" fill="none"/>
<path d="M14 822.5 H27.2 M14 827 H27.2 M14 831.5 H27.2" stroke="#f0f0f0" stroke-width="1.6"/>
<path d="M47.3 832.5 V819.5 H52 L53.5 821.5 H58 V823" stroke="#e0e0e0" stroke-width="1.2"/><path d="M47.3 820 H52 L53.4 821.8 H57.5 V823.3 H51 V832 H47.3 Z" fill="#bdbdbd"/><circle cx="57.3" cy="828" r="4.9" stroke="#e8e8e8" stroke-width="1.2"/><path d="M53.8 831.8 L51.5 834.5" stroke="#e8e8e8" stroke-width="1.3"/>
<path d="M77.2 820.8 H86.5 L83 825.3 V831.5 H80.6 V825.3 Z" stroke="#e8e8e8" stroke-width="1.1"/><path d="M88 820.8 H93 V829.5 H85" stroke="#e8e8e8" stroke-width="1.2"/><path d="M77.5 827 V833.2 H82.5 M85 833.2 H88 M90 833.2 H93.5" stroke="#e8e8e8" stroke-width="1.3"/>
<ellipse cx="124.5" cy="822.3" rx="4.4" ry="2.1" fill="#f3c02c"/><path d="M120.1 824 Q124.5 827.4 128.9 824 V826 Q124.5 829.4 120.1 826 Z M120.1 827.2 Q124.5 830.6 128.9 827.2 V828 Q124.5 831.4 120.1 828 Z" fill="#f3c02c"/>
<path d="M185.8 821.8 H196.2 L191 828 Z" fill="#fff"/>
<path d="M218 827 H230.2 M224.1 821 V833.1" stroke="#e8e8e8" stroke-width="2"/>
<path d="M1342.3 819.5 V835 M1344 820.5 V834 L1349.8 829.5 Z M1342.3 819.5 L1334.2 829.3 L1342.3 835 M1340.5 822 L1342.3 823.3 M1338.8 824.2 L1342.3 826.8 M1337 826.3 L1342.3 830.3 M1335.5 828.3 L1342.3 833.5" stroke="#474747" stroke-width="0.9"/>
<circle cx="1368" cy="826.4" r="8" fill="#f5301f"/>
<path d="M1383.5 820.3 L1391 826.2 L1388.7 828.2 L1388 827.8 L1385 830.8 L1384.6 833.6 L1378.6 825.2 L1381.2 825.4 L1384.3 822.4 L1383.2 821.6 Z M1386.6 829.4 L1392.8 834.8" stroke="#e8e8e8" stroke-width="1.1" stroke-linejoin="round"/>
<path d="M1402 825 H1408 L1405 829.8 Z" fill="#e0e0e0"/>
<path d="M1428 819.8 A7.6 7.6 0 1 0 1428 834.4" stroke="#e0e0e0" stroke-width="1.2"/><path d="M1428.5 823 A4.2 4.2 0 1 0 1426 830.8" stroke="#e0e0e0" stroke-width="1.2"/><rect x="1428" y="828.8" width="6.3" height="6.3" fill="#12c41e"/>
<path d="M0 839.5 Q2.5 840.5 3.5 845" stroke="#8a9aa8" stroke-width="1.2"/><path d="M1443 840 Q1439.5 841 1438.5 845 H1443 Z" fill="#8a8a8a"/>
</svg>
<!--/BOTTOM-->

<!--OVERLAYS-->
<div class="abs" style="left:381px;top:533px;width:661px;height:288px;border:3px solid #d87eb3;box-shadow:0 0 3px rgba(0,0,0,0.5),inset 0 0 3px rgba(0,0,0,0.5);z-index:5"></div>
<svg width="140" height="90" viewBox="980 545 140 90" style="left:980px;top:545px;z-index:6" fill="none"><defs><filter id="ds2" x="-30%" y="-30%" width="160%" height="160%"><feGaussianBlur in="SourceAlpha" stdDeviation="1.1"/><feOffset dx="-1" dy="1.5"/><feComponentTransfer><feFuncA type="linear" slope="0.42"/></feComponentTransfer><feMerge><feMergeNode/><feMergeNode in="SourceGraphic"/></feMerge></filter></defs>
<g filter="url(#ds2)"><path d="M1053.6 610.3 L1014 578" stroke="#f0e442" stroke-width="5" stroke-linecap="round"/><path d="M1004.2 567.8 L1025.6 573.5 L1024.7 577.9 L1016.5 577.5 L1017.2 585.6 L1012.2 587.8 Z" fill="#f0e442"/></g>
<path d="M1127.3 599.4 V615.6 L1131 612.3 L1133.7 617.9 L1136.4 616.7 L1133.9 611.2 L1138.6 610.8 Z" fill="#fff" stroke="#0c0c14" stroke-width="1.1" stroke-linejoin="round"/>
</svg>
<!--/OVERLAYS-->
</body>
</html>
